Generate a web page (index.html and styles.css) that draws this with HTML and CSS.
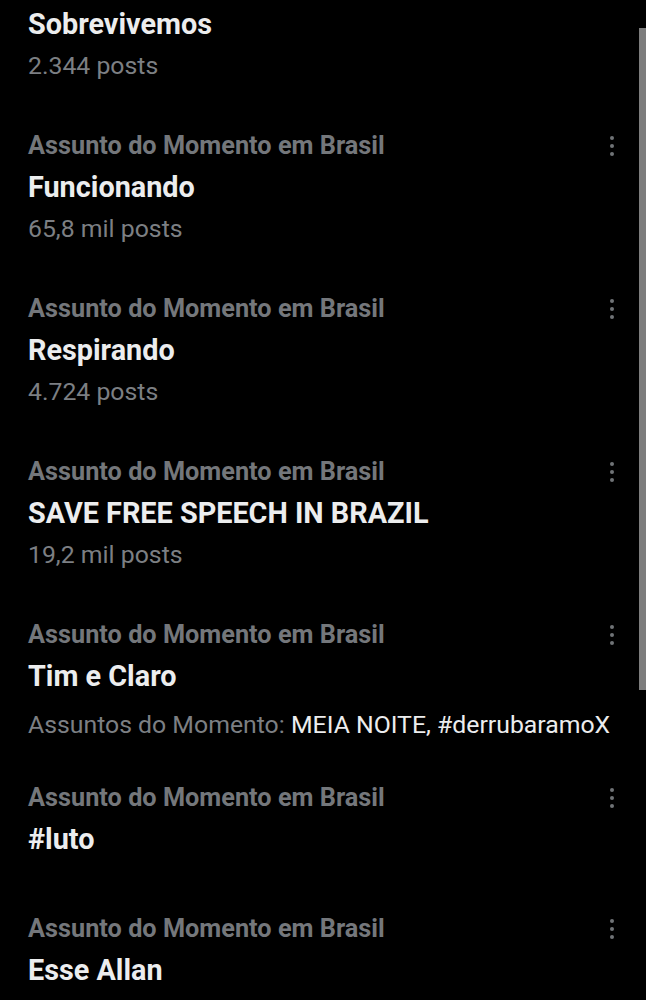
FILE: index.html
```html
<!DOCTYPE html>
<html lang="pt-BR">
<head>
<meta charset="utf-8">
<title>Assuntos do Momento</title>
<link rel="stylesheet" href="styles.css">
</head>
<body>
<div class="page">
  <ul class="trends">
    <li class="trend first">
      <div class="title">Sobrevivemos</div>
      <div class="meta">2.344 posts</div>
    </li>
    <li class="trend">
      <div class="head"><span>Assunto do Momento em Brasil</span><span class="more"><i></i><i></i><i></i></span></div>
      <div class="title">Funcionando</div>
      <div class="meta">65,8 mil posts</div>
    </li>
    <li class="trend">
      <div class="head"><span>Assunto do Momento em Brasil</span><span class="more"><i></i><i></i><i></i></span></div>
      <div class="title">Respirando</div>
      <div class="meta">4.724 posts</div>
    </li>
    <li class="trend">
      <div class="head"><span>Assunto do Momento em Brasil</span><span class="more"><i></i><i></i><i></i></span></div>
      <div class="title">SAVE FREE SPEECH IN BRAZIL</div>
      <div class="meta">19,2 mil posts</div>
    </li>
    <li class="trend related">
      <div class="head"><span>Assunto do Momento em Brasil</span><span class="more"><i></i><i></i><i></i></span></div>
      <div class="title">Tim e Claro</div>
      <div class="meta">Assuntos do Momento: <span class="hl">MEIA NOITE, #derrubaramoX</span></div>
    </li>
    <li class="trend short">
      <div class="head"><span>Assunto do Momento em Brasil</span><span class="more"><i></i><i></i><i></i></span></div>
      <div class="title">#luto</div>
    </li>
    <li class="trend">
      <div class="head"><span>Assunto do Momento em Brasil</span><span class="more"><i></i><i></i><i></i></span></div>
      <div class="title">Esse Allan</div>
    </li>
  </ul>
  <div class="scrollbar"></div>
</div>
</body>
</html>
```
FILE: styles.css
```css
html, body {
  margin: 0;
  padding: 0;
  background: #000;
}
body {
  font-family: Roboto, "Noto Sans", sans-serif;
  color: #e7e9ea;
  overflow: hidden;
  height: 1000px;
}
.page {
  position: relative;
  width: 646px;
  height: 1000px;
}
.trends {
  list-style: none;
  margin: 0;
  padding: 0;
}
.trend {
  padding: 20px 0 19px 28px;
}
.trend.first {
  padding-top: 3px;
}
.head {
  display: flex;
  align-items: center;
  justify-content: space-between;
  height: 41px;
  font-size: 25.3px;
  font-weight: 700;
  color: #74777b;
}
.more {
  display: flex;
  flex-direction: column;
  gap: 4px;
  width: 4px;
  margin-right: 32px;
}
.more i {
  display: block;
  width: 4px;
  height: 4px;
  border-radius: 50%;
  background: #707376;
}
.title {
  height: 42px;
  line-height: 42px;
  font-size: 28.8px;
  font-weight: 700;
  color: #ecedee;
}
.meta {
  height: 41px;
  line-height: 41px;
  font-size: 24.8px;
  color: #7c7f83;
}
.related .meta {
  margin-top: 7px;
  height: 41px;
}
.related {
  padding-bottom: 12px;
}
.hl {
  color: #ecedee;
}
.short {
  padding-bottom: 28px;
}
.scrollbar {
  position: absolute;
  top: 28px;
  right: 0;
  width: 7px;
  height: 662px;
  background: #7d7d7d;
}
```
